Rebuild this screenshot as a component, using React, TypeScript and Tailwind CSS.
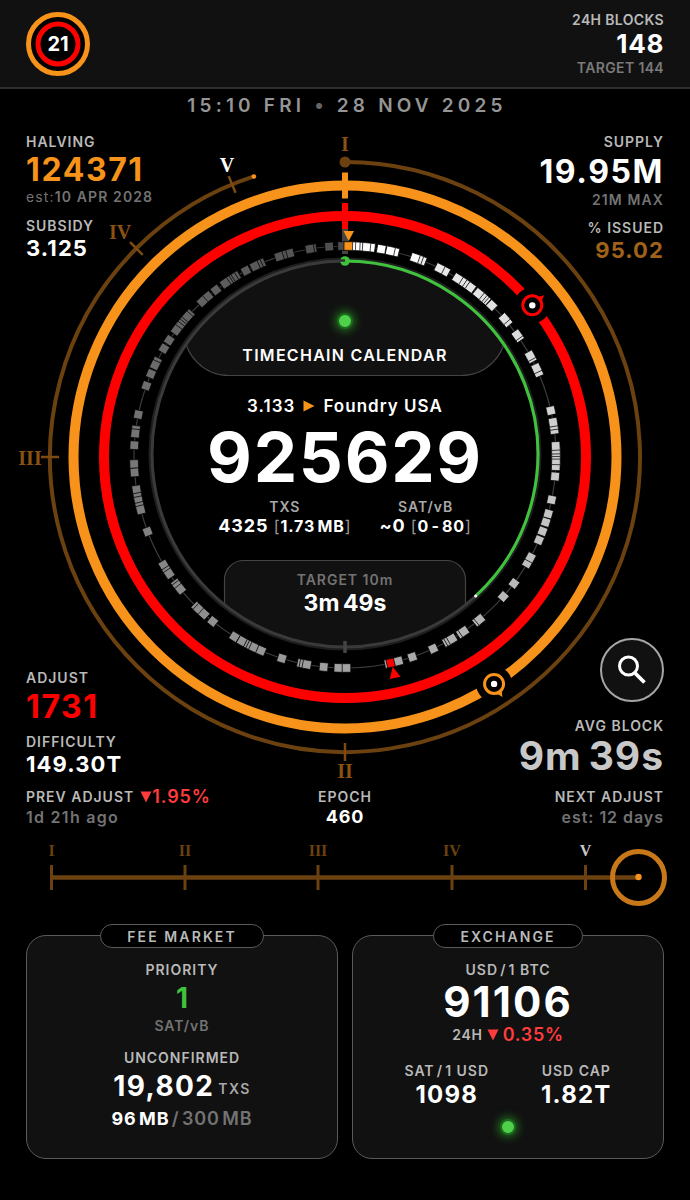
import React, { useState } from 'react';

const ORANGE = '#f7931a';
const BROWN = '#6b4110';
const RED = '#ff0000';
const GREEN = '#3fc23c';

const CX = 345;
const CY = 457;

// Angles in degrees, clockwise from twelve o'clock, newest block first.
const BLOCKS = [
  0.9, 1.7, 2.9, 3.6, 5.75, 7, 9.9, 12.4, 13.6, 19.35, 20.3, 21.3, 26.6, 28.3, 32.2, 33.4, 34.3, 36.5,
  39.2, 40.2, 40.9, 41.6, 44.1, 49, 50.1, 54.6, 55.3, 61.3, 62, 65.1, 66.3, 77.3, 80.5, 81.4, 82.6,
  87, 88, 88.7, 89.4, 90.9, 92.5, 95.3, 101.7, 105.6, 108, 110.6, 113.2, 118.4, 120.2, 126.8, 131.4,
  140.3, 141, 145.7, 146.5, 149.5, 150.3, 151, 155.3, 161.4, 165.3, 167.4, 168, 179.6, 181.8, 185.8,
  190.4, 191.2, 191.9, 197.4, 203.4, 205.5, 206.3, 207, 209.2, 211.6, 218.8, 221.9, 223.8, 224.6,
  231.2, 232.3, 233, 236.4, 237.2, 239.2, 249.3, 255.5, 256.4, 258, 259, 261.1, 265.8, 268.1, 273.2,
  276.4, 277.4, 281.6, 289.7, 293.2, 295.8, 296.8, 300.9, 303.6, 306.9, 308, 308.8, 309.5, 311.6,
  312.4, 317.4, 319.5, 322.3, 325.4, 326.2, 326.8, 327.9, 328.8, 332, 334.7, 335.6, 336.5, 341.8,
  342.8, 344.8, 350.4, 351.1, 355.7, 359.2,
];

const CURRENT_BLOCK = 0.9;
const ADJUST_BLOCK = 167.4;

function polar(angle: number, radius: number) {
  const rad = (angle * Math.PI) / 180;
  return { x: CX + radius * Math.sin(rad), y: CY - radius * Math.cos(rad) };
}

function blockColor(angle: number) {
  if (angle === CURRENT_BLOCK) return ORANGE;
  if (angle === ADJUST_BLOCK) return RED;
  const v = Math.round(angle < 20 ? 255 : 246 - angle * 0.47);
  return `rgb(${v},${v},${v})`;
}

interface MarkerProps {
  angle: number;
  radius: number;
  color: string;
  pointer: number;
}

const Marker: React.FC<MarkerProps> = ({ angle, radius, color, pointer }) => {
  const { x, y } = polar(angle, radius);
  return (
    <g transform={`translate(${x} ${y})`}>
      <circle r="18" fill="#000" />
      <path d="M-4.500 -9 Q-1.500 -11 0 -15.500 Q1.500 -11 4.500 -9 Z" fill={color} transform={`rotate(${pointer})`} />
      <circle r="9.500" fill="#000" stroke={color} strokeWidth="3" />
      <circle r="3.200" fill="#fff" />
    </g>
  );
};

const Dial: React.FC = () => {
  const end = polar(342, 295);
  const start = polar(0, 295);
  return (
    <svg viewBox="0 120 690 664" className="col-start-1 row-start-1 w-full" aria-hidden="true">
      <defs>
        <clipPath id="face">
          <circle cx="345" cy="454" r="193" />
        </clipPath>
      </defs>

      {/* Epoch ring */}
      <path
        d={`M${start.x} ${start.y} A295 295 0 1 1 ${end.x} ${end.y}`}
        fill="none"
        stroke={BROWN}
        strokeWidth="4"
      />
      <circle cx={start.x} cy={start.y} r="5.5" fill={BROWN} />
      <circle cx={end.x} cy={end.y} r="2.3" fill={ORANGE} />
      {[180, 270, 315, 337.5].map((a) => (
        <path
          key={a}
          d="M345 153 V171"
          stroke="#7d4b10"
          strokeWidth="2.5"
          transform={`rotate(${a} ${CX} ${CY})`}
        />
      ))}
      <g
        fill="#8a5212"
        fontFamily="'Liberation Serif', serif"
        fontWeight="700"
        fontSize="20"
        textAnchor="middle"
      >
        <text x="345" y="151">I</text>
        <text x="345" y="778">II</text>
        <text x="30" y="465">III</text>
        <text x="120" y="239">IV</text>
        <text x="227" y="172" fill="#fff">V</text>
      </g>

      {/* Halving and difficulty rings */}
      <circle cx={CX} cy={CY} r="271.5" fill="none" stroke={ORANGE} strokeWidth="10" />
      <circle cx={CX} cy={CY} r="241" fill="none" stroke={RED} strokeWidth="10" />
      <path d="M345 172.500 V198.500" stroke={ORANGE} strokeWidth="6" />
      <path d="M345 203 V229" stroke={RED} strokeWidth="6" />
      <path d="M345 229 V254" stroke="#444" strokeWidth="6" />

      {/* Blocks of the last day */}
      <circle cx={CX} cy={CY} r="211" fill="none" stroke="#3c3c3c" strokeWidth="1.2" />
      {[...BLOCKS].reverse().map((a) => (
        <rect
          key={a}
          x="340.700"
          y="241.700"
          width="8.600"
          height="8.600"
          fill={blockColor(a)}
          stroke="#000"
          strokeWidth="0.7"
          transform={`rotate(${a} ${CX} ${CY})`}
        />
      ))}
      <path d="M343.500 231 H354 L348.700 241 Z" fill={ORANGE} />
      <path d="M339.500 683.500 H350.500 L345 672 Z" fill={RED} transform="rotate(-12.800 345 457)" />

      {/* Face */}
      <g clipPath="url(#face)" fill="#111" stroke="#444" strokeWidth="1.2">
        <rect x="184" y="220" width="322" height="155.500" rx="45" />
        <rect x="224.500" y="560.500" width="241" height="120" rx="19" />
      </g>
      <circle cx="345" cy="454" r="194.500" fill="none" stroke="#1e1e1e" strokeWidth="4" />
      <circle cx="345" cy="454" r="193" fill="none" stroke="#3a3a3a" strokeWidth="3" />
      <path d="M345 641 V653" stroke="#444" strokeWidth="3.500" />
      <path d="M345 261 A193 193 0 0 1 475.600 596" fill="none" stroke={GREEN} strokeWidth="3" />
      <circle cx="345" cy="261" r="4.800" fill={GREEN} />
      <path d="M340 260.500 H345" stroke="#333" strokeWidth="2.500" />
      <circle cx="475.600" cy="596" r="1.500" fill="#fff" />

      <Marker angle={51} radius={241} color={RED} pointer={50} />
      <Marker angle={146.7} radius={271.5} color={ORANGE} pointer={147} />
    </svg>
  );
};

const Led: React.FC = () => (
  <span className="block size-4 rounded-full border-2 border-[#1a6b1c] bg-[#4fd04b] shadow-[0_0_10px_2px_rgba(50,180,40,0.6)]" />
);

const Triangle: React.FC<{ className?: string }> = ({ className = '' }) => (
  <svg viewBox="0 0 12 12" className={`inline-block size-3 ${className}`} aria-hidden="true">
    <path d="M0.500 0.500 H11.500 L6 11.500 Z" fill="currentColor" />
  </svg>
);

const Label: React.FC<{ children: React.ReactNode; className?: string }> = ({
  children,
  className = 'text-[#b9b9b9]',
}) => <div className={`text-sm leading-5 tracking-[0.07em] ${className}`}>{children}</div>;

const NUMERALS = [
  { x: 51.5, label: 'I' },
  { x: 185, label: 'II' },
  { x: 318, label: 'III' },
  { x: 452, label: 'IV' },
  { x: 585.5, label: 'V' },
];

const Timeline: React.FC = () => (
  <svg viewBox="0 830 690 80" className="mt-[3px] w-full" role="img" aria-label="Epoch timeline">
    <path d="M50 877.500 H638" stroke={BROWN} strokeWidth="4.500" />
    {NUMERALS.map(({ x, label }) => (
      <g key={label}>
        <path d={`M${x} 865 V890`} stroke={BROWN} strokeWidth="3" />
        <text
          x={x}
          y="856"
          fill={label === 'V' ? '#c8c8c8' : BROWN}
          fontFamily="'Liberation Serif', serif"
          fontWeight="700"
          fontSize="16"
          textAnchor="middle"
        >
          {label}
        </text>
      </g>
    ))}
    <circle cx="638.500" cy="877.500" r="26" fill="none" stroke="#c87818" strokeWidth="5" />
    <circle cx="638.500" cy="877" r="3.200" fill={ORANGE} />
  </svg>
);

const Card: React.FC<{ title: string; children: React.ReactNode }> = ({ title, children }) => (
  <section className="flex h-56 flex-1 flex-col items-center rounded-[20px] border border-[#5a5a5a] bg-[#111]">
    <h2 className="-mt-3 mb-3 h-6 rounded-full border border-[#5a5a5a] bg-black px-[26px] text-sm leading-6 tracking-[0.15em] text-[#b9b9b9]">
      {title}
    </h2>
    {children}
  </section>
);

export default function App() {
  const [searching, setSearching] = useState(false);

  return (
    <div className="min-h-screen bg-black font-['Inter',sans-serif] font-semibold text-white">
      <header className="flex h-[89px] items-center justify-between border-b-2 border-[#2e2e2e] bg-[#111] px-[26px]">
        <a href="#home" aria-label="Home" className="block">
          <svg viewBox="0 0 64 64" className="size-16">
            <circle cx="32" cy="32" r="29.500" fill="#000" stroke="#f7931a" strokeWidth="5" />
            <circle cx="32" cy="32" r="20" fill="#000" stroke="#ff0000" strokeWidth="5" />
            <text
              x="32"
              y="39"
              fill="#fff"
              fontFamily="Inter, sans-serif"
              fontWeight="700"
              fontSize="20"
              textAnchor="middle"
            >
              21
            </text>
          </svg>
        </a>
        <div className="text-right">
          <div className="text-sm leading-5 tracking-wide text-[#b9b9b9]">24H BLOCKS</div>
          <div className="text-[26px] leading-7 font-bold tracking-wide">148</div>
          <div className="text-sm leading-5 tracking-wide text-[#7a7a7a]">TARGET 144</div>
        </div>
      </header>

      <div className="h-[31px] pl-1 text-center text-[19px] leading-[34px] tracking-[0.22em] text-[#959595]">
        15:10 FRI <span className="text-[#666]">•</span> 28 NOV 2025
      </div>

      <main>
        <div className="grid">
          <Dial />

          <div className="z-10 col-start-1 row-start-1 flex justify-between px-[26px] pt-3 pb-2">
            <div className="flex flex-col justify-between">
              <div>
                <Label>HALVING</Label>
                <div className="text-[32px] leading-9 font-bold tracking-wider text-[#f7931a]">124371</div>
                <div className="text-sm leading-[18px] tracking-[0.08em] text-[#737373]">
                  <span className="font-normal">est:</span>10 APR 2028
                </div>
                <Label className="mt-2.5 text-[#b9b9b9]">SUBSIDY</Label>
                <div className="text-[22px] leading-6 font-bold tracking-wider">3.125</div>
              </div>
              <div>
                <Label>ADJUST</Label>
                <div className="text-[32px] leading-[38px] font-bold tracking-wider text-[#ff0000]">1731</div>
                <Label className="mt-1.5 text-[#b9b9b9]">DIFFICULTY</Label>
                <div className="text-[22px] leading-6 font-bold tracking-wider">149.30T</div>
              </div>
            </div>

            <div className="flex flex-col items-end justify-between text-right">
              <div>
                <Label>SUPPLY</Label>
                <div className="text-[32px] leading-10 font-bold tracking-wider">19.95M</div>
                <div className="text-sm leading-4 tracking-[0.08em] text-[#737373]">21M MAX</div>
                <Label className="mt-2.5 text-[#b9b9b9]">% ISSUED</Label>
                <div className="text-[22px] leading-6 font-bold tracking-wider text-[#a0621a]">95.02</div>
              </div>
              <div className="flex flex-col items-end">
                <button
                  type="button"
                  aria-label="Search"
                  aria-pressed={searching}
                  onClick={() => setSearching(!searching)}
                  className="mb-3.5 flex size-16 items-center justify-center rounded-full border-2 border-[#a6a6a6] bg-[#111]"
                >
                  <svg viewBox="0 0 30 30" className="size-[30px]" fill="none" stroke="#fff">
                    <circle cx="11.500" cy="11" r="9" strokeWidth="3" />
                    <path d="M18 18 L27.500 27.500" strokeWidth="3.800" />
                  </svg>
                </button>
                <Label>AVG BLOCK</Label>
                <div className="text-[39px] leading-10 font-bold tracking-wide text-[#c8c8c8]">
                  9m{'\u2009'}39s
                </div>
              </div>
            </div>
          </div>

          <div className="col-start-1 row-start-1 flex flex-col items-center pt-[193px]">
            <Led />
            <h1 className="mt-3.5 text-base leading-6 tracking-[0.08em]">TIMECHAIN CALENDAR</h1>
            <div className="mt-[27px] flex items-center gap-2 text-[17px] leading-6 tracking-[0.06em]">
              3.133
              <Triangle className="-rotate-90 text-[#f7931a]" />
              Foundry USA
            </div>
            <div className="text-[69px] leading-[79px] font-bold tracking-wide">925629</div>
            <div className="flex gap-7 text-center">
              <div>
                <Label className="text-[#a8a8a8]">TXS</Label>
                <div className="text-lg leading-[18px] font-bold tracking-wider">
                  4325{' '}
                  <span className="text-[16px]">
                    <span className="font-normal text-[#999]">[</span>1.73{'\u200a'}MB
                    <span className="font-normal text-[#999]">]</span>
                  </span>
                </div>
              </div>
              <div>
                <Label className="text-[#a8a8a8]">SAT/vB</Label>
                <div className="text-lg leading-[18px] font-bold tracking-wider">
                  ~0{' '}
                  <span className="text-[16px]">
                    <span className="font-normal text-[#999]">[</span>0{'\u200a'}-{'\u200a'}80
                    <span className="font-normal text-[#999]">]</span>
                  </span>
                </div>
              </div>
            </div>
            <Label className="mt-[35px] text-[#737373]">TARGET 10m</Label>
            <div className="text-[23px] leading-[26px] font-bold">3m{'\u2009'}49s</div>
          </div>
        </div>

        <div className="grid grid-cols-[1fr_auto_1fr] px-[26px] pt-[3px]">
          <div>
            <Label className="flex items-center gap-1.5 text-[#b9b9b9]">
              PREV ADJUST
              <span className="flex items-center text-lg leading-5 tracking-wider text-[#ff3b3b]">
                <Triangle />
                1.95%
              </span>
            </Label>
            <div className="text-base leading-5 tracking-[0.08em] text-[#737373]">1d 21h ago</div>
          </div>
          <div className="text-center">
            <Label>EPOCH</Label>
            <div className="text-lg leading-5 font-bold tracking-wider">460</div>
          </div>
          <div className="text-right">
            <Label>NEXT ADJUST</Label>
            <div className="text-base leading-5 tracking-[0.06em] text-[#737373]">est: 12 days</div>
          </div>
        </div>

        <Timeline />

        <div className="flex gap-3.5 px-[26px] pt-[25px] pb-10">
          <Card title="FEE MARKET">
            <Label>PRIORITY</Label>
            <div className="text-[28px] leading-9 font-bold text-[#3fc23c]">1</div>
            <Label className="text-[#737373]">SAT/vB</Label>
            <Label className="mt-3 text-[#b9b9b9]">UNCONFIRMED</Label>
            <div className="text-[28px] leading-9 font-bold tracking-wider">
              19,802
              <span className="ml-1 align-[2px] text-[14px] font-semibold text-[#a8a8a8]">TXS</span>
            </div>
            <div className="text-lg leading-6 tracking-wider">
              <span className="font-bold">96{'\u200a'}MB</span>
              <span className="text-[#737373]">
                {'\u200a'}/{'\u200a'}300{'\u200a'}MB
              </span>
            </div>
          </Card>
          <Card title="EXCHANGE">
            <Label>
              USD{'\u200a'}/{'\u200a'}1 BTC
            </Label>
            <div className="text-[42px] leading-11 font-bold tracking-wider">91106</div>
            <div className="flex items-center gap-1 text-sm leading-[22px] tracking-wider text-[#b9b9b9]">
              24H
              <Triangle className="text-[#ff3b3b]" />
              <span className="text-lg leading-[22px] text-[#ff3b3b]">0.35%</span>
            </div>
            <div className="mt-[15px] flex gap-[52px] text-center">
              <div>
                <Label>
                  SAT{'\u200a'}/{'\u200a'}1 USD
                </Label>
                <div className="text-2xl leading-7 font-bold tracking-wider">1098</div>
              </div>
              <div>
                <Label>USD CAP</Label>
                <div className="text-2xl leading-7 font-bold tracking-wider">1.82T</div>
              </div>
            </div>
            <div className="mt-2.5">
              <Led />
            </div>
          </Card>
        </div>
      </main>
    </div>
  );
}
